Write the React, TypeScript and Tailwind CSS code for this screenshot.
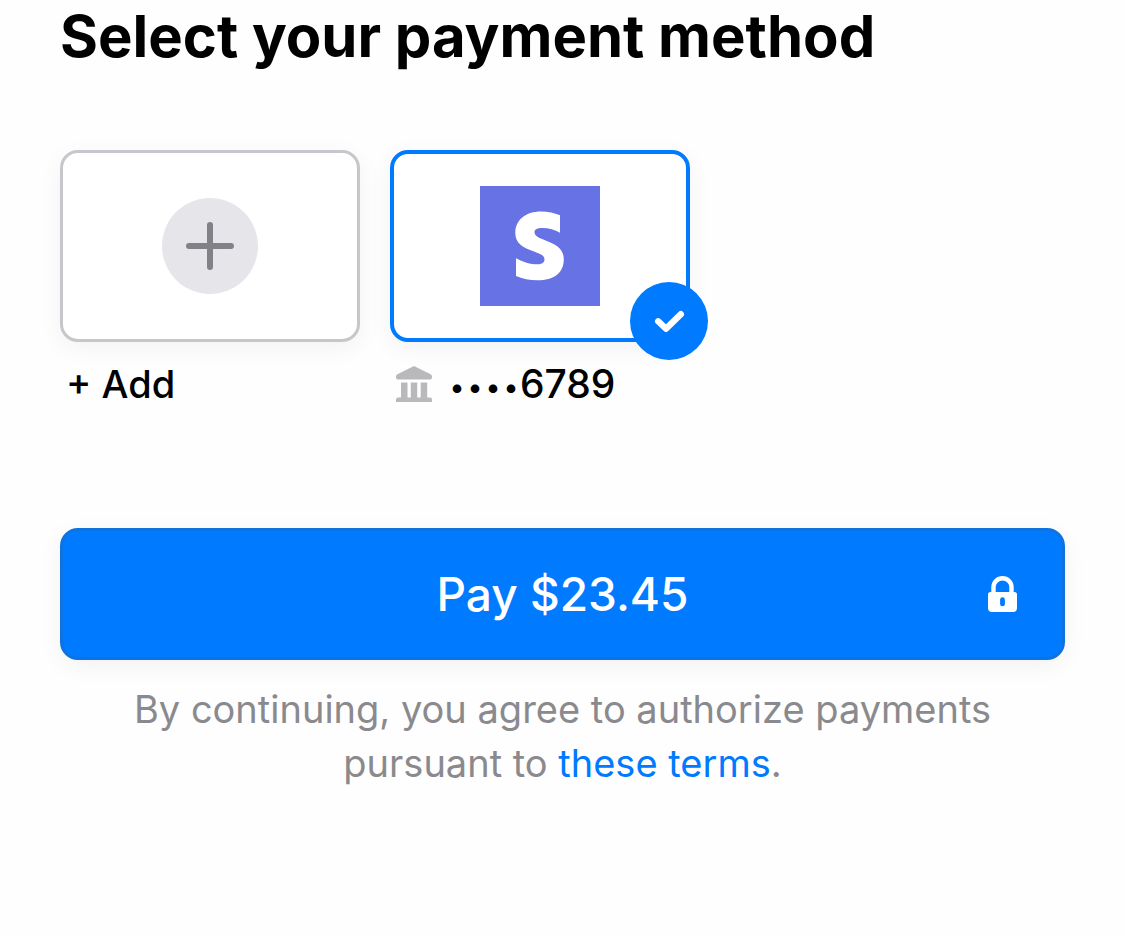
import React from "react";

function PlusIcon() {
  return (
    <svg className="size-12" viewBox="0 0 48 48" fill="none" stroke="#828187" strokeWidth="6" strokeLinecap="round" aria-hidden="true">
      <path d="M24 3v42M3 24h42" />
    </svg>
  );
}

function StripeLogo() {
  return (
    <svg className="size-30" viewBox="0 0 120 120" aria-hidden="true">
      <rect width="120" height="120" fill="#6772e5" />
      <path
        fill="#fff"
        d="M80 29.3V46.7C75 44 68.5 42 62.5 42C57.5 42 54.5 43.2 54.5 46.2C54.5 50 59 51.8 65 54.2C76.5 58.5 83.8 63 83.8 73.3C83.8 87 74 94.3 57.5 94.3C49.5 94.3 42 92.8 36 90V72.2C42.5 76 50.5 78.3 57.5 78.3C62 78.3 64.5 76.5 64.5 73.3C64.5 69.5 60.5 68 54 65.5C43 61.5 35.3 57.5 35.3 47C35.3 34 45.5 25.5 61 25.5C68 25.5 74.5 26.8 80 29.3Z"
      />
    </svg>
  );
}

function CheckIcon() {
  return (
    <svg className="size-full" viewBox="0 0 78 78" fill="none" stroke="#fff" strokeWidth="6.4" strokeLinecap="round" strokeLinejoin="round" aria-hidden="true">
      <path d="M28.2 39.3 36 46.8 50.8 32.2" />
    </svg>
  );
}

function BankIcon() {
  return (
    <svg className="size-9 shrink-0" viewBox="0 0 36 36" fill="#b9b9bb" aria-hidden="true">
      <path d="M18 0 34.6 8.3Q36 9 36 10.6V11.5Q36 13.4 34 13.4H2Q0 13.4 0 11.5V10.6Q0 9 1.4 8.3Z" />
      <path d="M5 16.5h6.5V32H5zM14.8 16.5h6.4V32h-6.4zM24.7 16.5h6.5V32h-6.5z" />
      <path d="M2 31.5h32q2 0 2 2V36H0v-2.5q0-2 2-2z" />
    </svg>
  );
}

function LockIcon() {
  return (
    <svg className="h-9 w-[29px]" viewBox="0 0 29 36" aria-hidden="true">
      <path d="M5.5 18V11.2a9 9 0 0 1 18 0V18" fill="none" stroke="#fff" strokeWidth="4.4" />
      <path
        fill="#fff"
        fillRule="evenodd"
        d="M2.5 16h24Q29 16 29 18.5V32q0 4-4 4H4q-4 0-4-4V18.5Q0 16 2.5 16ZM14.5 21.3a2.4 2.4 0 0 0-2.4 2.4v4.2a2.4 2.4 0 0 0 4.8 0v-4.2a2.4 2.4 0 0 0-2.4-2.4Z"
      />
    </svg>
  );
}

export default function App() {
  return (
    <main className="min-h-screen bg-[#fefefe] px-15 font-['Inter',sans-serif] text-black">
      <h1 className="text-[58px] leading-[72px] font-bold">Select your payment method</h1>

      <form onSubmit={(e) => e.preventDefault()}>
        <div className="flex flex-wrap gap-[30px] pt-[78px]">
          <button type="button" className="w-[300px] cursor-pointer text-left">
            <span className="flex h-48 items-center justify-center rounded-[18px] border-3 border-[#c6c6cb] bg-white shadow-[0_6px_24px_rgba(0,0,0,0.05)]">
              <span className="flex size-24 items-center justify-center rounded-full bg-[#e5e5ea]">
                <PlusIcon />
              </span>
            </span>
            <span className="flex h-[84px] items-center px-1.5 text-[38px] font-medium">+ Add</span>
          </button>

          <label className="w-[300px] cursor-pointer">
            <input type="radio" name="method" className="sr-only" defaultChecked />
            <span className="relative flex h-48 items-center justify-center rounded-[18px] border-4 border-[#007aff] bg-white shadow-[0_6px_24px_rgba(0,0,0,0.05)]">
              <StripeLogo />
              <span className="absolute -right-[22px] -bottom-[22px] size-[78px] rounded-full bg-[#007aff]">
                <CheckIcon />
              </span>
            </span>
            <span className="flex h-[84px] items-center gap-4 px-1.5 text-[39px] font-medium">
              <BankIcon />
              <span className="flex items-baseline">
                <span className="text-[32px] font-light">••••</span>
                <span>6789</span>
              </span>
            </span>
          </label>
        </div>

        <button
          type="submit"
          className="mt-[102px] grid h-[132px] w-full cursor-pointer grid-cols-[1fr_auto_1fr] items-center rounded-[18px] border-3 border-[#0d73e2] bg-[#007aff] px-[45px] text-[46px] font-medium text-white shadow-[0_6px_24px_rgba(0,0,0,0.05)]"
        >
          <span className="col-start-2">Pay $23.45</span>
          <span className="justify-self-end">
            <LockIcon />
          </span>
        </button>
      </form>

      <p className="mx-auto max-w-[900px] pt-[22px] text-center text-[38px] leading-[54px] text-[#8a8a8e]">
        By continuing, you agree to authorize payments pursuant to{" "}
        <a href="#terms" className="text-[#007aff]">
          these terms
        </a>
        .
      </p>
    </main>
  );
}
